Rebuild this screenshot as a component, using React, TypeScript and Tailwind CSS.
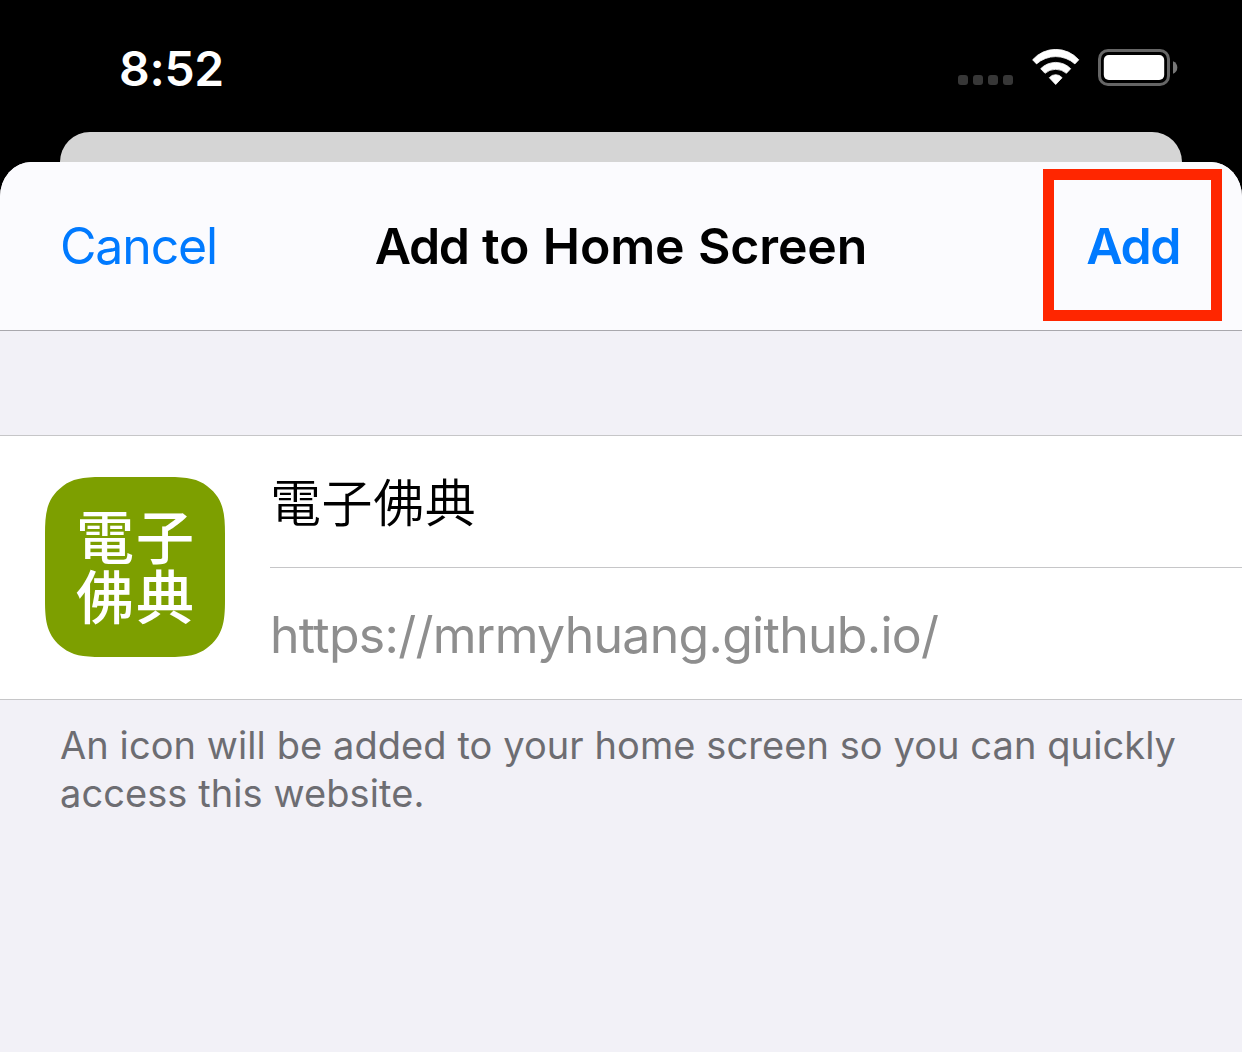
export default function App() {
  return (
    <main className="h-[1052px] w-[1242px] overflow-hidden bg-black font-['Inter','Noto_Sans_CJK_JP',sans-serif]">
      <header className="flex h-[132px] items-start justify-between pl-[119px] pr-[64px] pt-[44px]">
        <span className="mt-[1px] whitespace-nowrap text-[48px] leading-[48px] font-semibold tracking-[-0.3px] text-white">8:52</span>
        <div className="flex items-start">
          <div className="mr-[19px] mt-[31px] flex gap-[5px]">
            <i className="size-[10px] rounded-[3px] bg-[#373737]" />
            <i className="size-[10px] rounded-[3px] bg-[#373737]" />
            <i className="size-[10px] rounded-[3px] bg-[#373737]" />
            <i className="size-[10px] rounded-[3px] bg-[#373737]" />
          </div>
          <svg className="mr-[18px] mt-[5px]" width="48" height="36" viewBox="0 0 48 36" fill="white" stroke="white" strokeWidth="0.8" strokeLinejoin="round">
            <path d="M.6 10.800A30.800 30.800 0 0 1 46.800 10.800L42.900 14.900A28.900 28.900 0 0 0 4.500 14.900Z" />
            <path d="M8.700 19.700A21 21 0 0 1 38.700 19.700L34.400 24.300A16.300 16.300 0 0 0 13 24.300Z" />
            <path d="M17.300 28.700A8.300 8.300 0 0 1 30.100 28.700L23.700 35.500Z" />
          </svg>
          <svg className="mt-[5px]" width="80" height="37" viewBox="0 0 80 37">
            <rect x="1.500" y="1.500" width="69" height="34" rx="8.500" fill="none" stroke="#666" strokeWidth="3" />
            <rect x="5.800" y="6" width="60.400" height="25" rx="5" fill="white" />
            <path d="M75 12.200Q79.300 14 79.300 18.500T75 24.800Z" fill="#777" />
          </svg>
        </div>
      </header>
      <div className="mx-[60px] h-[30px] rounded-t-[30px] bg-[#d5d5d5]" />
      <section className="h-[890px] overflow-hidden rounded-t-[31px_35px] bg-[#f2f1f7]">
        <nav className="relative flex h-[169px] items-center justify-between border-b border-[#a9a8ad] bg-[#fbfbfe] pr-[62px] pl-[60px] text-[50px] leading-[60px]">
          <button className="w-[160px] text-left tracking-[-1.15px] text-[#007aff]">Cancel</button>
          <h1 className="relative left-[1px] whitespace-nowrap font-semibold tracking-[-0.150px] [word-spacing:1px]"><span className="tracking-[-1.400px]">Add</span> to Home Screen</h1>
          <button className="w-[160px] text-right font-semibold tracking-[-1.400px] text-[#007aff]">Add</button>
          <span className="absolute left-[1043px] top-[7px] h-[152px] w-[179px] border-[11px] border-[#ff2600]" />
        </nav>
        <div className="mt-[104px] flex h-[265px] border-y border-[#c6c6c8] bg-white pl-[45px]">
          <div className="relative mt-[41px] size-[180px]">
            <svg className="absolute inset-0" width="180" height="180" viewBox="0 0 180 180">
              <path d="M57 0H123C143 0 153 2 162 9C178 21 180 35 180 57V123C180 145 178 159 162 171C153 178 143 180 123 180H57C37 180 27 178 18 171C2 159 0 145 0 123V57C0 35 2 21 18 9C27 2 37 0 57 0Z" fill="#7d9f00" />
            </svg>
            <p className="relative whitespace-nowrap pl-[31px] pt-[31px] text-[58px] leading-[60px] font-medium tracking-[1.900px] text-white">電子<br />佛典</p>
          </div>
          <div className="ml-[45px] flex-1 text-[51px]">
            <div className="flex h-[132px] items-center border-b border-[#c6c6c8] pt-[5px] font-[350] tracking-[0.600px]">電子佛典</div>
            <div className="flex h-[131px] items-center pt-[4px] text-[50px] tracking-[-0.720px] text-[#8e8e8e]">https://mrmyhuang.github.io/</div>
          </div>
        </div>
        <p className="whitespace-nowrap pl-[60px] pt-[21px] text-[38px] leading-[48px] tracking-[0.080px] text-[#6d6d72]">An icon will be added to your home screen so you can quickly<br />access this website.</p>
      </section>
    </main>
  );
}
